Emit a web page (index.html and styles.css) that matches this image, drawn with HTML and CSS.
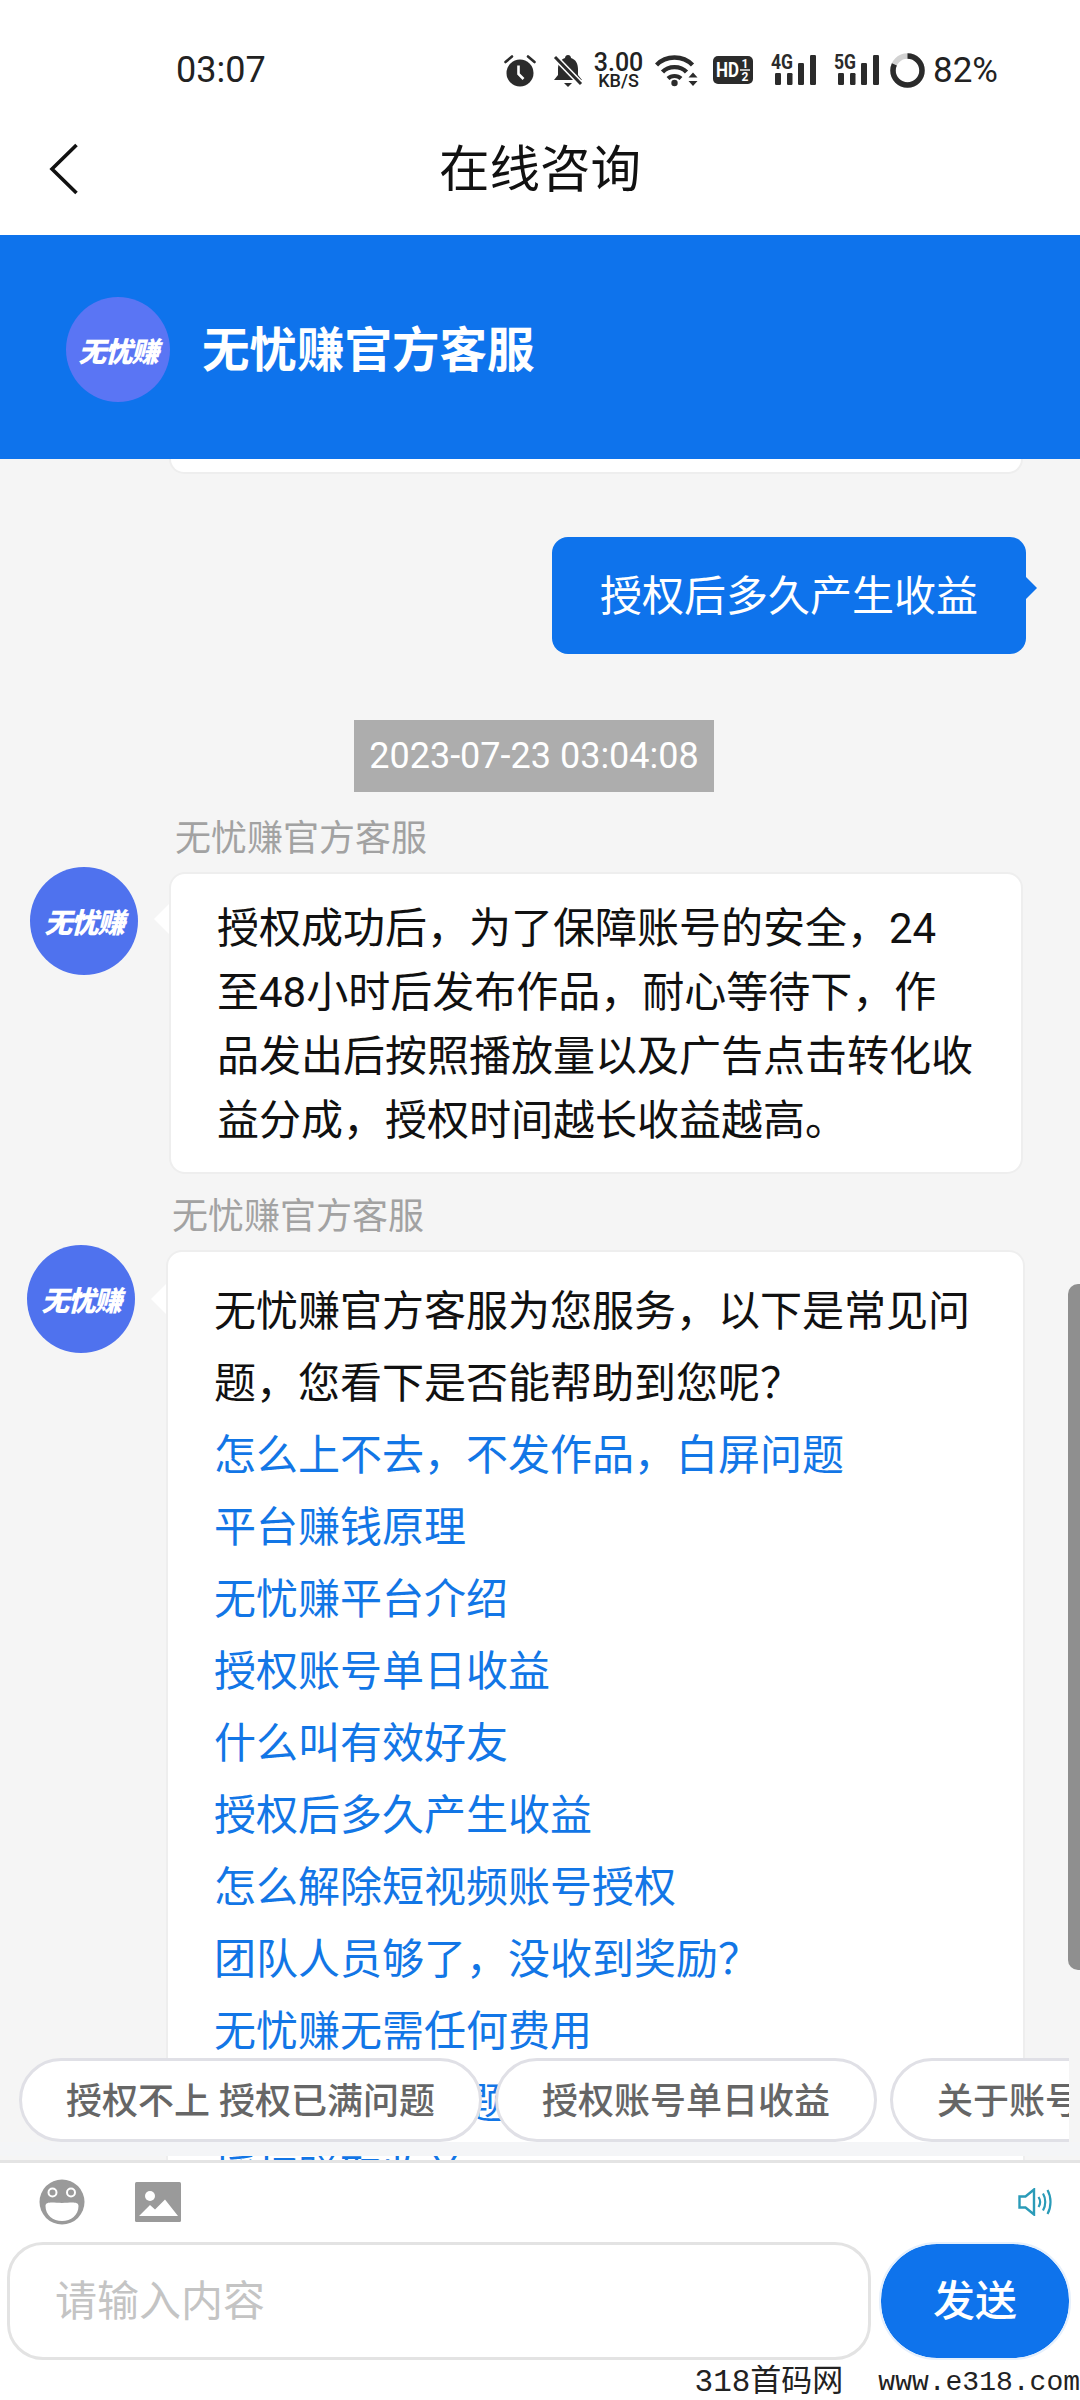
FILE: index.html
```html
<!DOCTYPE html>
<html lang="zh-CN">
  <head>
    <meta charset="UTF-8" />
    <meta name="viewport" content="width=device-width, initial-scale=1.0" />
    <title>在线咨询</title>
    <link rel="stylesheet" href="styles.css">
  </head>
  <body>
    <div class="page">
      <div class="statusBar">
        <span class="time">03:07</span>
        <div class="statusIcons">
          <svg class="icoAlarm" width="32" height="33" viewBox="0 0 32 33">
            <circle cx="16" cy="19" r="13.5" fill="#2b2b2b"/>
            <path d="M1.5 8 L8 2.5 M30.5 8 L24 2.5" stroke="#2b2b2b" stroke-width="2.6" stroke-linecap="round"/>
            <path d="M14.5 11.5 V20 L19.5 25" stroke="#fff" stroke-width="2.6" fill="none"/>
          </svg>
          <svg class="icoBell" width="30" height="33" viewBox="0 0 30 33">
            <path d="M15 1 C17 1 18 2.5 18 4 C23 5.5 25 10 25 15 V21 L29 26 H1 L5 21 V15 C5 10 7 5.5 12 4 C12 2.5 13 1 15 1 Z" fill="#2b2b2b"/>
            <path d="M11 29 H19 L15 33 Z" fill="#2b2b2b"/>
            <path d="M2 3 L28 30" stroke="#fff" stroke-width="6"/>
            <path d="M2 3 L28 30" stroke="#2b2b2b" stroke-width="3"/>
          </svg>
          <div class="speed">
            <span class="speedNum">3.00</span>
            <span class="speedUnit">KB/S</span>
          </div>
          <svg class="icoWifi" width="43" height="33" viewBox="0 0 43 33">
            <path d="M1.5 11 C11 1 28 1 37.5 11" stroke="#2b2b2b" stroke-width="4.4" fill="none"/>
            <path d="M7.5 18 C13.5 11.5 25.5 11.5 31.5 18" stroke="#2b2b2b" stroke-width="4.4" fill="none"/>
            <path d="M13 24.5 C16.5 21 22.5 21 26 24.5" stroke="#2b2b2b" stroke-width="4"  fill="none"/>
            <circle cx="19.5" cy="29" r="3.2" fill="#2b2b2b"/>
            <path d="M33.5 23.5 L38 18.5 L42.5 23.5 Z M33.5 27 H42.5 L38 32 Z" fill="#2b2b2b"/>
          </svg>
          <svg class="icoHd" width="40" height="28" viewBox="0 0 40 28">
            <rect width="40" height="28" rx="5" fill="#2b2b2b"/>
            <text x="3" y="21" class="hdText" textLength="23" lengthAdjust="spacingAndGlyphs">HD</text>
            <text x="28.5" y="12" class="hdSub">1</text>
            <text x="28.5" y="25" class="hdSub">2</text>
            <path d="M27 14 H37" stroke="#fff" stroke-width="1.4"/>
          </svg>
          <svg class="icoNet" width="45" height="32" viewBox="0 0 45 32">
            <text x="0" y="15" class="netText" textLength="22" lengthAdjust="spacingAndGlyphs">4G</text>
            <rect x="4" y="19" width="6" height="12" rx="1.2" fill="#2b2b2b"/>
            <rect x="16" y="19" width="5.500" height="12" rx="1.2" fill="#2b2b2b"/>
            <rect x="27" y="9" width="6" height="22" rx="1.2" fill="#2b2b2b"/>
            <rect x="39" y="1" width="6" height="30" rx="1.2" fill="#2b2b2b"/>
          </svg>
          <svg class="icoNet" width="45" height="32" viewBox="0 0 45 32">
            <text x="0" y="15" class="netText" textLength="22" lengthAdjust="spacingAndGlyphs">5G</text>
            <rect x="4" y="19" width="6" height="12" rx="1.2" fill="#2b2b2b"/>
            <rect x="16" y="19" width="5.500" height="12" rx="1.2" fill="#2b2b2b"/>
            <rect x="27" y="9" width="6" height="22" rx="1.2" fill="#2b2b2b"/>
            <rect x="39" y="1" width="6" height="30" rx="1.2" fill="#2b2b2b"/>
          </svg>
          <svg class="icoRing" width="35" height="35" viewBox="0 0 35 35">
            <circle cx="17.500" cy="17.500" r="14.500" fill="none" stroke="#d2d2d2" stroke-width="5.500"/>
            <circle cx="17.500" cy="17.500" r="14.500" fill="none" stroke="#2b2b2b" stroke-width="5.500" pathLength="100" stroke-dasharray="82 18" transform="rotate(-90 17.5 17.5)"/>
          </svg>
          <span class="battery">82%</span>
        </div>
      </div>

      <div class="navBar">
        <svg class="backIcon" width="30" height="52" viewBox="0 0 30 52">
          <path d="M27.500 2 L3 26 L27.500 50" fill="none" stroke="#111" stroke-width="3.600"/>
        </svg>
        <span class="navTitle">在线咨询</span>
      </div>

      <div class="chatHeader">
        <div class="avatar avatarHeader"><span class="logo">无忧赚</span></div>
        <span class="chatTitle">无忧赚官方客服</span>
      </div>

      <div class="chat">
        <div class="prevBubble"></div>

        <div class="myRow">
          <div class="myBubble">授权后多久产生收益</div>
        </div>

        <div class="stamp">2023-07-23 03:04:08</div>

        <div class="msg msgOne">
          <div class="avatar"><span class="logo">无忧赚</span></div>
          <div class="msgBody">
            <div class="sender">无忧赚官方客服</div>
            <div class="bubble bubbleOne">授权成功后，为了保障账号的安全，24至48小时后发布作品，耐心等待下，作品发出后按照播放量以及广告点击转化收益分成，授权时间越长收益越高。</div>
          </div>
        </div>

        <div class="msg msgTwo">
          <div class="avatar"><span class="logo">无忧赚</span></div>
          <div class="msgBody">
            <div class="sender">无忧赚官方客服</div>
            <div class="bubble bubbleTwo">
              <p>无忧赚官方客服为您服务，以下是常见问题，您看下是否能帮助到您呢？</p>
              <a>怎么上不去，不发作品，白屏问题</a>
              <a>平台赚钱原理</a>
              <a>无忧赚平台介绍</a>
              <a>授权账号单日收益</a>
              <a>什么叫有效好友</a>
              <a>授权后多久产生收益</a>
              <a>怎么解除短视频账号授权</a>
              <a>团队人员够了，没收到奖励？</a>
              <a>无忧赚无需任何费用</a>
              <a>关于账号的问题</a>
              <a>授权赚取收益</a>
            </div>
          </div>
        </div>

        <div class="scrollThumb"></div>

        <div class="chips">
          <span class="chip">授权不上 授权已满问题</span>
          <span class="chip">授权账号单日收益</span>
          <span class="chip">关于账号单日收益</span>
        </div>
      </div>

      <div class="composer">
        <div class="tools">
          <svg width="46" height="46" viewBox="0 0 46 46">
            <circle cx="23" cy="23" r="22.500" fill="#9a9a9a"/>
            <circle cx="13.500" cy="13.500" r="4" fill="#9a9a9a" stroke="#fff" stroke-width="2"/>
            <circle cx="32" cy="13.500" r="4" fill="#9a9a9a" stroke="#fff" stroke-width="2"/>
            <path d="M6.500 27 C6.500 22 15 24 23 24 C31 24 39.500 22 39.500 27 C39.500 36 32 42 23 42 C14 42 6.500 36 6.500 27 Z" fill="#fff"/>
          </svg>
          <svg class="imgIcon" width="46" height="40" viewBox="0 0 46 40">
            <rect width="46" height="40" rx="1.500" fill="#9a9a9a"/>
            <circle cx="15" cy="14" r="5" fill="#fff"/>
            <path d="M4 34 L15 23 L20 27.500 L30 17.500 L43 34 Z" fill="#fff"/>
          </svg>
          <svg class="soundIcon" width="34" height="28" viewBox="0 0 34 28">
            <path d="M1.500 8.500 H7.500 L16 1.500 V26.500 L7.500 19.500 H1.500 Z" fill="none" stroke="#2a9bb8" stroke-width="2.400"/>
            <path d="M20.500 9 C22.500 12 22.500 16 20.500 19 M25 5.500 C28 10.500 28 17.500 25 22.500 M29.500 2 C33.500 9 33.500 19 29.500 26" fill="none" stroke="#2a9bb8" stroke-width="2.200"/>
          </svg>
        </div>
        <div class="inputRow">
          <div class="inputBox">请输入内容</div>
          <div class="sendBtn">发送</div>
        </div>
        <div class="watermark">
          <span class="wmName">318首码网</span>
          <span>www.e318.com</span>
        </div>
      </div>
    </div>
  </body>
</html>
```

FILE: styles.css
```css
* {
  box-sizing: border-box;
}
body {
  margin: 0;
  font-family: Roboto, "Noto Sans CJK SC", sans-serif;
  color: #111;
  background-color: #fff;
}
.page {
  width: 1080px;
  height: 2400px;
  display: flex;
  flex-direction: column;
  overflow: hidden;
}

/* status bar */
.statusBar {
  height: 100px;
  padding: 40px 82px 0 176px;
  display: flex;
  align-items: center;
  justify-content: space-between;
  color: #222;
}
.time {
  font-size: 36px;
}
.statusIcons {
  display: flex;
  align-items: center;
}
.icoBell { margin-left: 17px; }
.speed {
  margin-left: 11px;
  width: 49px;
  display: flex;
  flex-direction: column;
  align-items: center;
  font-weight: 500;
}
.speedNum {
  font-size: 25px;
  line-height: 20px;
}
.speedUnit {
  font-size: 18px;
  line-height: 15px;
}
.icoWifi { margin-left: 12px; }
.icoHd { margin-left: 15px; }
.icoNet { margin-left: 18px; }
.icoRing { margin-left: 11px; }
.hdText {
  font-family: "Roboto";
  font-size: 21px;
  font-weight: 700;
  fill: #fff;
}
.hdSub {
  font-family: "Roboto";
  font-size: 12px;
  font-weight: 700;
  fill: #fff;
}
.netText {
  font-family: "Roboto";
  font-size: 20px;
  font-weight: 700;
  fill: #2b2b2b;
}
.battery {
  margin-left: 8px;
  font-size: 35px;
}

/* nav */
.navBar {
  height: 135px;
  padding-bottom: 6px;
  display: flex;
  align-items: center;
  justify-content: center;
  position: relative;
  background-color: #fff;
}
.backIcon {
  position: absolute;
  left: 49px;
  top: 43px;
}
.navTitle {
  font-size: 50.5px;
}

/* blue header */
.chatHeader {
  height: 224px;
  padding: 5px 0 0 66px;
  display: flex;
  align-items: center;
  gap: 32px;
  background-color: #0e73ec;
}
.chatTitle {
  padding-bottom: 6px;
  color: #fff;
  font-size: 47.5px;
  font-weight: 700;
}

.avatar {
  width: 108px;
  height: 108px;
  border-radius: 50%;
  background-color: #4f72ee;
  display: flex;
  align-items: center;
  justify-content: center;
  flex-shrink: 0;
}
.avatarHeader {
  width: 104px;
  height: 105px;
  background-color: #5a75f4;
}
.logo {
  color: #fff;
  font-size: 28px;
  font-weight: 900;
  font-style: italic;
  letter-spacing: -1.5px;
}

/* chat */
.chat {
  height: 1701px;
  position: relative;
  overflow: hidden;
  background-color: #f5f5f5;
}
.prevBubble {
  height: 15px;
  margin-left: 169px;
  width: 854px;
  background-color: #fff;
  border: 2px solid #eeeeee;
  border-top: 0;
  border-radius: 0 0 16px 16px;
}
.myRow {
  margin-top: 63px;
  padding-right: 54px;
  display: flex;
  justify-content: flex-end;
}
.myBubble {
  position: relative;
  height: 117px;
  padding: 0 48px 6px;
  display: flex;
  align-items: center;
  color: #fff;
  font-size: 42px;
  background-color: #0e73ec;
  border-radius: 16px;
}
.myBubble::after {
  content: "";
  position: absolute;
  right: -11px;
  top: 40px;
  border-left: 11px solid #0e73ec;
  border-top: 11px solid transparent;
  border-bottom: 11px solid transparent;
}
.stamp {
  width: 360px;
  height: 72px;
  margin: 66px 0 0 354px;
  display: flex;
  align-items: center;
  justify-content: center;
  color: #fff;
  font-size: 36px;
  background-color: #adadad;
}
.msg {
  display: flex;
  align-items: flex-start;
}
.msgOne {
  margin-top: 26px;
  padding-left: 30px;
  gap: 31px;
}
.msgTwo {
  margin-top: 22px;
  padding-left: 27px;
  gap: 31px;
}
.msg .avatar {
  margin-top: 49px;
}
.msgTwo .avatar {
  margin-top: 49px;
}
.sender {
  height: 54px;
  margin-left: 6px;
  line-height: 42px;
  font-size: 36px;
  color: #a2a2a2;
}
.bubble {
  position: relative;
  background-color: #fff;
  border: 2px solid #eeeeee;
  border-radius: 16px;
  font-size: 42px;
}
.bubble::before {
  content: "";
  position: absolute;
  left: -17px;
  top: 32px;
  border-right: 15px solid #fff;
  border-top: 15px solid transparent;
  border-bottom: 15px solid transparent;
}
.bubbleOne::before {
  top: 30px;
}
.bubbleOne {
  width: 854px;
  padding: 23px 48px 19px 46px;
  line-height: 64px;
}
.bubbleTwo {
  width: 859px;
  padding: 24px 53px 20px 46px;
  line-height: 72px;
}
.bubbleTwo p {
  margin: 0;
}
.bubbleTwo a {
  display: block;
  color: #1276e6;
}
.scrollThumb {
  position: absolute;
  right: 0;
  top: 825px;
  width: 12px;
  height: 686px;
  border-radius: 10px 0 0 10px;
  background-color: #8f8f8f;
}
.chips {
  position: absolute;
  left: 0;
  right: 0;
  top: 1599px;
  padding-left: 19px;
  width: 1080px;
  display: flex;
  gap: 13px;
  overflow: hidden;
  border-bottom: 14px solid #f4f5f7;
}
.chips::after {
  content: "";
  position: absolute;
  right: 0;
  top: 0;
  bottom: 0;
  width: 11px;
  background-color: #f5f5f5;
}
.chip {
  height: 84px;
  padding: 0 44px 5px;
  flex-shrink: 0;
  display: flex;
  align-items: center;
  white-space: pre;
  color: #666;
  font-size: 36px;
  font-weight: 500;
  background-color: #fff;
  border: 3px solid #e0e0e6;
  border-radius: 42px;
}

/* bottom input */
.composer {
  flex: 1;
  border-top: 3px solid #e4e4e4;
  background-color: #fff;
}
.tools {
  height: 79px;
  padding: 0 28px 2px 39px;
  display: flex;
  align-items: center;
}
.imgIcon {
  margin-left: 50px;
}
.soundIcon {
  margin-left: auto;
}
.inputRow {
  padding: 0 9px 0 7px;
  display: flex;
  align-items: center;
  gap: 8px;
}
.inputBox {
  width: 864px;
  height: 118px;
  padding: 0 0 8px 45px;
  display: flex;
  align-items: center;
  color: #c4c4c4;
  font-size: 42px;
  background-color: #fff;
  border: 3px solid #e3e3e3;
  border-radius: 36px;
}
.sendBtn {
  width: 192px;
  height: 118px;
  padding-bottom: 8px;
  display: flex;
  align-items: center;
  justify-content: center;
  color: #fff;
  font-size: 42px;
  font-weight: 500;
  background-color: #0e73ec;
  background-clip: padding-box;
  border: 2px solid #e6f0fc;
  border-radius: 58px;
}
.watermark {
  height: 40px;
  display: flex;
  justify-content: flex-end;
  align-items: flex-end;
  gap: 35px;
  font-family: "Liberation Mono", "Noto Sans CJK SC", monospace;
  font-size: 28px;
  line-height: 34px;
  color: #222;
}
.wmName {
  font-size: 31px;
}
```
